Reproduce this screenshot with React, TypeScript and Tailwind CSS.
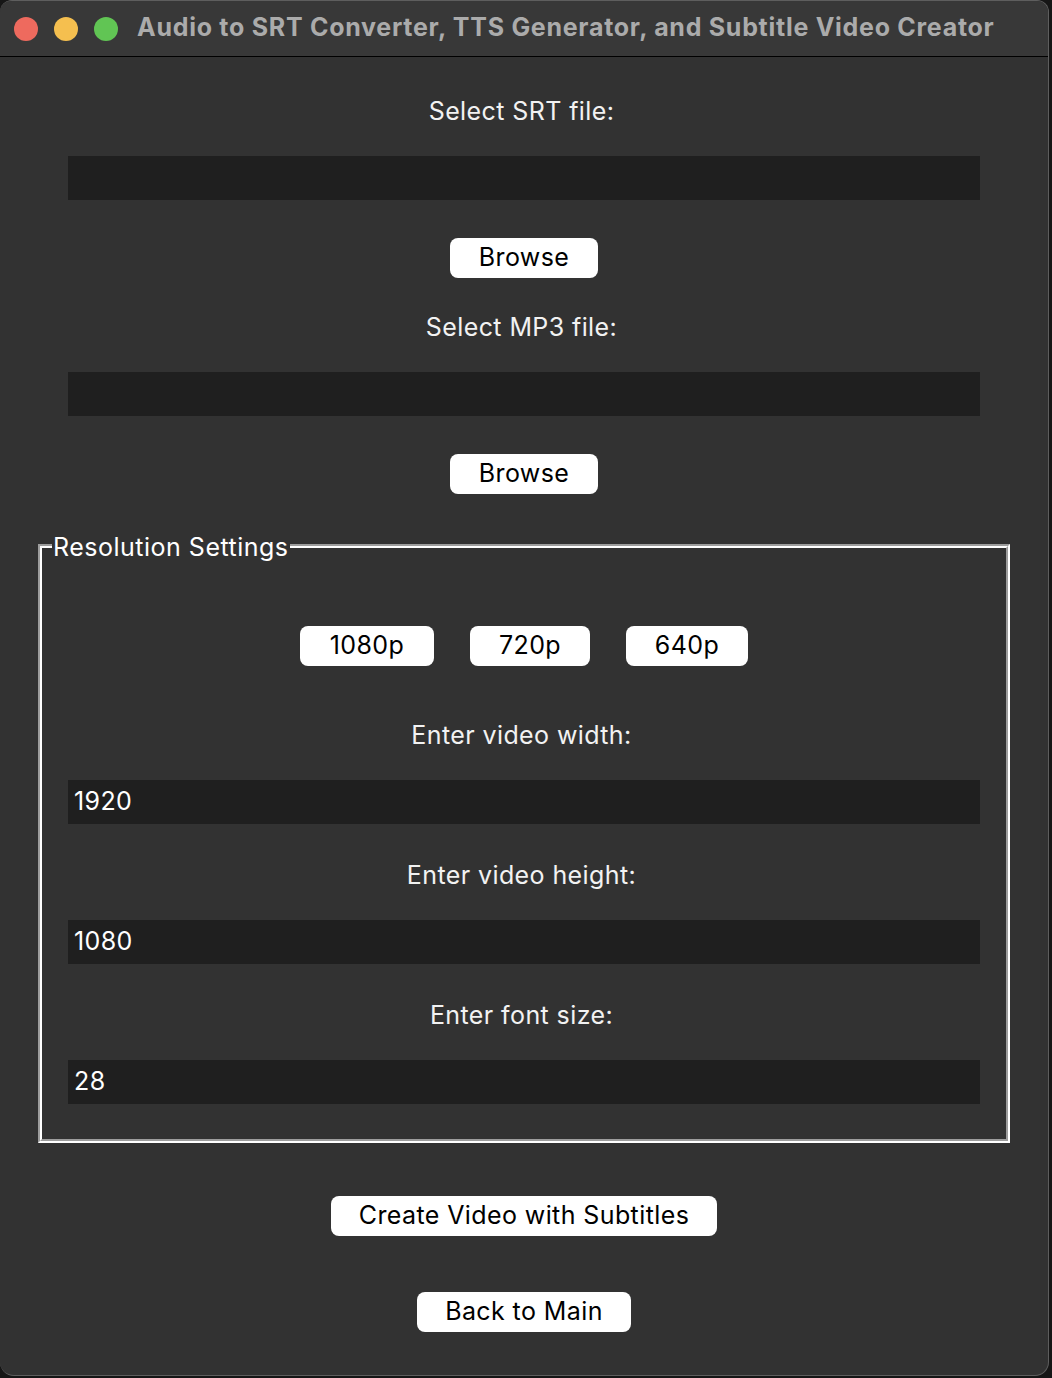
import React from "react";

const font = { fontFamily: "Inter, 'Noto Sans', sans-serif" };

function Label({ children, className = "" }: { children: React.ReactNode; className?: string }) {
  return (
    <div className={"h-[30px] leading-[30px] pr-[5px] text-[25px] tracking-[0.4px] text-[#f2f2f2] text-center " + className}>{children}</div>
  );
}

function Field({ value = "", className = "" }: { value?: string; className?: string }) {
  return (
    <div className={"w-[912px] h-[44px] bg-[#1f1f1f] flex items-center pl-[6px] text-[25px] tracking-[0.4px] text-white " + className}>
      {value}
    </div>
  );
}

function Btn({ children, w, className = "" }: { children: React.ReactNode; w: string; className?: string }) {
  return (
    <div
      className={
        "h-[40px] bg-white rounded-[8px] flex items-center justify-center text-[25px] tracking-[0.4px] text-black " + w + " " + className
      }
    >
      {children}
    </div>
  );
}

export default function App() {
  return (
    <div className="w-[1052px] h-[1378px] bg-[#161616] overflow-hidden" style={font}>
      <div className="w-[1049px] h-[1376px] bg-[#323232] rounded-b-[14px] rounded-t-[12px] border border-[#5e5e5e] border-l-0 overflow-hidden flex flex-col">
        <div className="h-[56px] bg-[#383838] border-b border-b-black flex items-center shrink-0">
          <div className="flex items-center gap-[16px] ml-[14px]">
            <div className="w-[24px] h-[24px] rounded-full bg-[#ee6a5e]" />
            <div className="w-[24px] h-[24px] rounded-full bg-[#f5bf4f]" />
            <div className="w-[24px] h-[24px] rounded-full bg-[#61c554]" />
          </div>
          <div className="ml-[19px] -mt-[2px] text-[25px] font-bold text-[#ababab] tracking-[0.72px] whitespace-nowrap">
            Audio to SRT Converter, TTS Generator, and Subtitle Video Creator
          </div>
        </div>
        <div className="flex flex-col items-center">
          <Label className="mt-[39px]">Select SRT file:</Label>
          <Field className="mt-[30px]" />
          <Btn w="w-[148px]" className="mt-[38px]">Browse</Btn>
          <Label className="mt-[34px]">Select MP3 file:</Label>
          <Field className="mt-[30px]" />
          <Btn w="w-[148px]" className="mt-[38px]">Browse</Btn>

          <div className="relative mt-[50px] w-[972px] border-2 border-t-[#9d9d9d] border-l-[#9d9d9d] border-r-white border-b-white">
            <div className="absolute left-[12px] top-[-14px] h-[30px] leading-[30px] px-[1px] bg-[#323232] text-[25px] tracking-[0.5px] text-white">
              Resolution Settings
            </div>
            <div className="border-2 border-t-white border-l-white border-r-[#9d9d9d] border-b-[#9d9d9d] flex flex-col items-center pb-[35px]">
              <div className="flex gap-[36px] mt-[78px]">
                <Btn w="w-[134px]">1080p</Btn>
                <Btn w="w-[120px]">720p</Btn>
                <Btn w="w-[122px]">640p</Btn>
              </div>
              <Label className="mt-[54px]">Enter video width:</Label>
              <Field className="mt-[30px]" value="1920" />
              <Label className="mt-[36px]">Enter video height:</Label>
              <Field className="mt-[30px]" value="1080" />
              <Label className="mt-[36px]">Enter font size:</Label>
              <Field className="mt-[30px]" value="28" />
            </div>
          </div>

          <Btn w="w-[386px]" className="mt-[53px]">Create Video with Subtitles</Btn>
          <Btn w="w-[214px]" className="mt-[56px]">Back to Main</Btn>
        </div>
      </div>
    </div>
  );
}
